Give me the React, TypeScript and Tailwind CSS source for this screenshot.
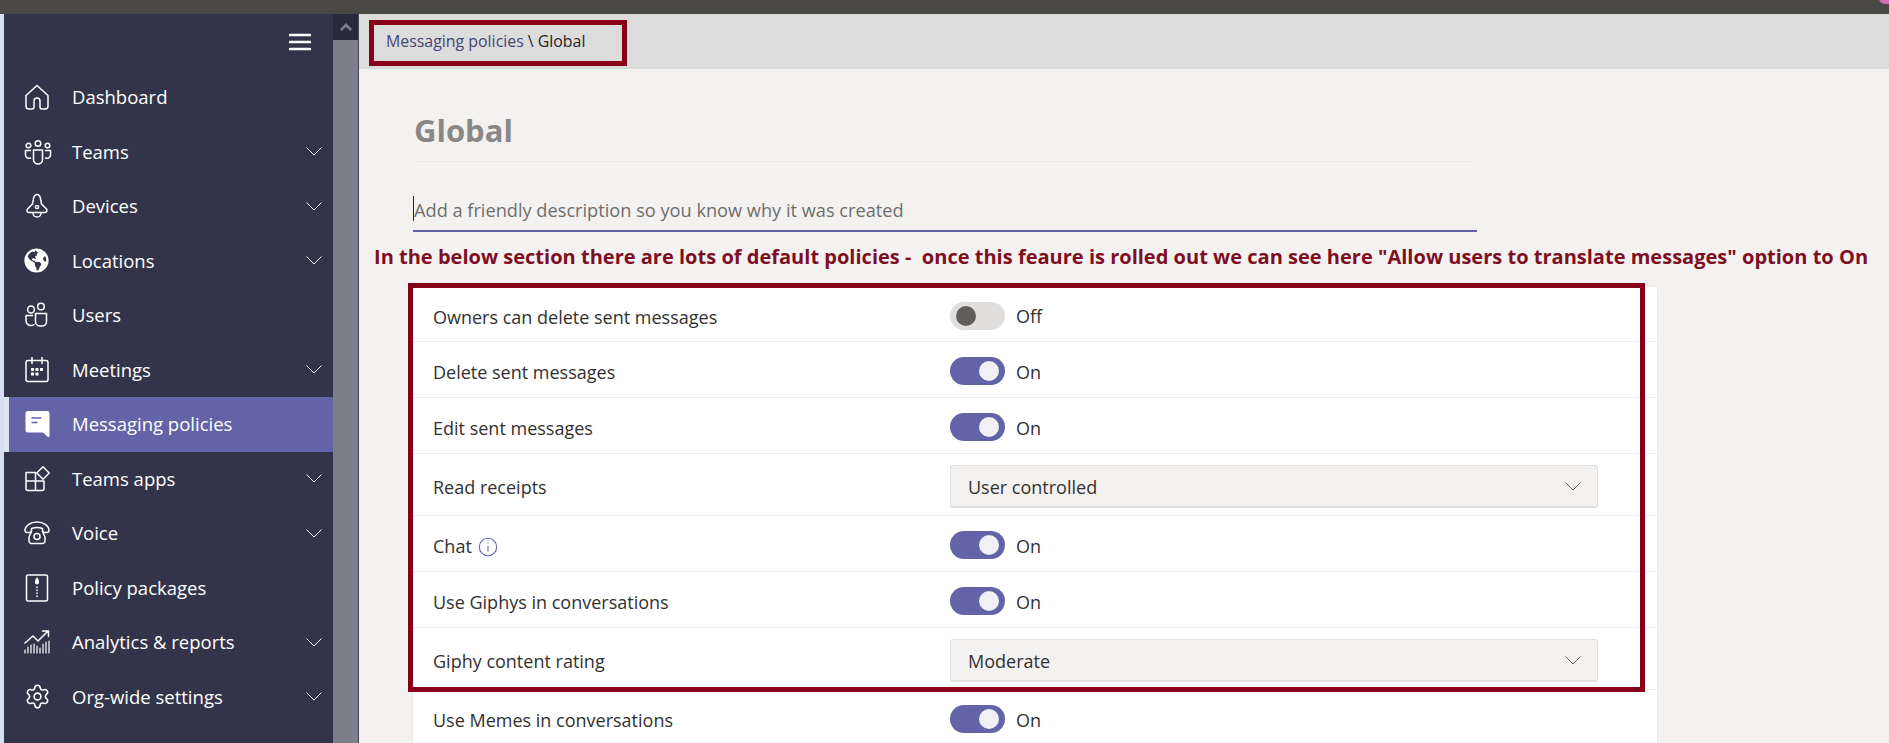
import React from "react";
import { FaGlobeAmericas } from "react-icons/fa";
import { Settings } from "lucide-react";

const s = { fill: "none", stroke: "currentColor", strokeWidth: 1.5, strokeLinecap: "round" as const, strokeLinejoin: "round" as const };

const Home = () => (
  <svg width="26" height="26" viewBox="0 0 26 26" {...s}>
    <path d="M2 11.500 13 1.500l11 10v10.500a3 3 0 0 1-3 3h-3a2 2 0 0 1-2-2v-6a3 3 0 0 0-6 0v6a2 2 0 0 1-2 2H5a3 3 0 0 1-3-3z" />
  </svg>
);
const Teams = () => (
  <svg width="28" height="26" viewBox="0 0 28 26" {...s}>
    <circle cx="14" cy="4.500" r="2.800" />
    <circle cx="4.500" cy="6.500" r="2.300" />
    <circle cx="23.500" cy="6.500" r="2.300" />
    <path d="M9.500 11h9v9.500a4.500 4.500 0 0 1-9 0z" />
    <path d="M6.500 11.500H1.500v4.500a3.500 3.500 0 0 0 5 3M21.500 11.500h5v4.500a3.500 3.500 0 0 1-5 3" />
  </svg>
);
const Devices = () => (
  <svg width="26" height="26" viewBox="0 0 26 26" {...s}>
    <path d="M13 1.500c2 0 3 1.500 3.500 4l1 5.500 5 5c1 1.500.5 3-1.500 3.500H5C3 19.500 2.500 18 3.500 16l5-5 1-5.500C10 3 11 1.500 13 1.500z" />
    <circle cx="13" cy="14" r="1.600" />
    <path d="M9 20.500c.5 3 2.500 3.500 4 3.500s3.500-.5 4-3.500" />
  </svg>
);
const Users = () => (
  <svg width="26" height="26" viewBox="0 0 26 26" {...s}>
    <circle cx="7" cy="7.500" r="3.400" />
    <circle cx="17" cy="4.500" r="3.300" />
    <path d="M11.500 11.500h11v8a4.500 4.500 0 0 1-4.500 4.500h-2a4.500 4.500 0 0 1-4.500-4.500z" />
    <path d="M8.500 13.500H2v5a5 5 0 0 0 8 4" />
  </svg>
);
const Meetings = () => (
  <svg width="26" height="26" viewBox="0 0 26 26" {...s}>
    <path d="M4 3.500h18a2 2 0 0 1 2 2v17a2 2 0 0 1-2 2H4a2 2 0 0 1-2-2v-17a2 2 0 0 1 2-2zM8 .5v6M18 .5v6" />
    <g fill="currentColor" stroke="none">
      <rect x="7" y="11" width="3" height="3" />
      <rect x="11.500" y="11" width="3" height="3" />
      <rect x="16" y="11" width="3" height="3" />
      <rect x="7" y="15.500" width="3" height="3" />
      <rect x="11.500" y="15.500" width="3" height="3" />
    </g>
  </svg>
);
const Message = () => (
  <svg width="26" height="26" viewBox="0 0 26 26">
    <path d="M4 0h19a2.500 2.500 0 0 1 2.500 2.500V25c0 1-1 1.500-1.800.8L19 21.500H4A2.500 2.500 0 0 1 1.500 19V2.500A2.500 2.500 0 0 1 4 0z" fill="#fff" />
    <path d="M7.500 7h10M7.500 11.500h6" stroke="#6264a7" strokeWidth="1.600" fill="none" />
  </svg>
);
const Apps = () => (
  <svg width="26" height="26" viewBox="0 0 26 26" {...s}>
    <path d="M2 6.500h9.500V15H2zM2 15h9.500v9.500H4a2 2 0 0 1-2-2zM11.500 15H20v7.500a2 2 0 0 1-2 2h-6.500z" />
    <path d="M19 .8l6.200 6.200-6.200 6.200L12.800 7z" />
  </svg>
);
const Voice = () => (
  <svg width="26" height="26" viewBox="0 0 26 26" {...s}>
    <path d="M1 10.500C1 6 6 2 13 2s12 4 12 8.500c0 1.500-1 2-2.500 2h-2c-1.500 0-2-1-2-2.500V8.500c-3-1-8-1-11 0V10c0 1.500-.5 2.500-2 2.500h-2C2 12.500 1 12 1 10.500z" />
    <path d="M7.500 11.500 5 17v4a2.500 2.500 0 0 0 2.500 2.500h11A2.500 2.500 0 0 0 21 21v-4l-2.500-5.500" />
    <circle cx="13" cy="16.500" r="3" />
  </svg>
);
const Policy = () => (
  <svg width="26" height="28" viewBox="0 0 26 28" {...s}>
    <rect x="2.500" y="1" width="21" height="26" rx="1.500" />
    <path d="M13 3c1.500 2 2 3.500 2 5.500a2 2 0 0 1-4 0C11 6.500 11.500 5 13 3z" fill="currentColor" stroke="none" />
    <path d="M13 13v.5M13 16v.5M13 19v.5M13 22v.5" />
  </svg>
);
const Analytics = () => (
  <svg width="26" height="24" viewBox="0 0 26 24" fill="none" stroke="currentColor" strokeWidth="1.200" strokeLinecap="round">
    <path d="M1 23v-3M4 23v-6M7 23v-8M10 23v-9M13 23v-7M16 23v-5M19 23v-9M22 23v-11M25 23V11" />
    <path d="M1 13 9 6l5 5L24 1M18.500 1H24.500V6.500" strokeWidth="1.500" />
  </svg>
);
const Hamburger = () => (
  <svg width="22" height="18" viewBox="0 0 22 18" fill="none" stroke="#fff" strokeWidth="2.600" strokeLinecap="round">
    <path d="M1 2h20M1 9h20M1 16h20" />
  </svg>
);
const Chevron = ({ color = "#fff" }: { color?: string }) => (
  <svg width="16" height="9" viewBox="0 0 16 9" fill="none" stroke={color} strokeWidth="1">
    <path d="M.5.500 8 8l7.500-7.500" />
  </svg>
);
const Checklist = () => (
  <svg width="28" height="10" viewBox="0 0 28 10" fill="none" stroke="currentColor" strokeWidth="1.500">
    <path d="M1 2l2.500 2.500L7 1M2 1l3 3M11 2h17" />
  </svg>
);

const nav: { label: string; icon: React.ReactNode; chev?: boolean; active?: boolean }[] = [
  { label: "Dashboard", icon: <Home /> },
  { label: "Teams", icon: <Teams />, chev: true },
  { label: "Devices", icon: <Devices />, chev: true },
  { label: "Locations", icon: <FaGlobeAmericas size={25} />, chev: true },
  { label: "Users", icon: <Users /> },
  { label: "Meetings", icon: <Meetings />, chev: true },
  { label: "Messaging policies", icon: <Message />, active: true },
  { label: "Teams apps", icon: <Apps />, chev: true },
  { label: "Voice", icon: <Voice />, chev: true },
  { label: "Policy packages", icon: <Policy /> },
  { label: "Analytics & reports", icon: <Analytics />, chev: true },
  { label: "Org-wide settings", icon: <Settings size={27} strokeWidth={1.4} />, chev: true },
  { label: "", icon: <Checklist /> },
];

const Toggle = ({ on }: { on: boolean }) => (
  <div className="flex items-center">
    <div className={`flex h-[28px] w-[55px] items-center rounded-full px-[6px] ${on ? "justify-end bg-[#6264a7]" : "justify-start bg-[#e1dfdd]"}`}>
      <div className={`h-[20px] w-[20px] rounded-full ${on ? "bg-[#f0f0f5]" : "bg-[#605e5c]"}`} />
    </div>
    <span className="ml-[11px] pt-[2px] text-[#323130]">{on ? "On" : "Off"}</span>
  </div>
);

const Dropdown = ({ value }: { value: string }) => (
  <div className="flex h-[43px] w-[648px] items-center justify-between rounded-[3px] border border-b-2 border-[#e1dfdd] bg-[#f3f2f1] pl-[17px] pr-[16px] text-[#323130]">
    <span className="pt-[2px]">{value}</span>
    <Chevron color="#605e5c" />
  </div>
);

const rows: { label: string; h: string; toggle?: boolean; select?: string; info?: boolean }[] = [
  { label: "Owners can delete sent messages", h: "h-[55px] pt-[3px]", toggle: false },
  { label: "Delete sent messages", h: "h-[56px] pt-[3px]", toggle: true },
  { label: "Edit sent messages", h: "h-[56px] pt-[3px]", toggle: true },
  { label: "Read receipts", h: "h-[62px] pt-[4px]", select: "User controlled" },
  { label: "Chat", h: "h-[56px] pt-[3px]", toggle: true, info: true },
  { label: "Use Giphys in conversations", h: "h-[56px] pt-[3px]", toggle: true },
  { label: "Giphy content rating", h: "h-[62px] pt-[4px]", select: "Moderate" },
  { label: "Use Memes in conversations", h: "h-[56px] pt-[3px]", toggle: true },
];

export default function App() {
  return (
    <div className="relative flex h-[743px] w-[1889px] flex-col overflow-hidden bg-[#f3f2f1] font-['Open_Sans',sans-serif] text-[18px]">
      <div className="relative h-[14px] shrink-0 bg-[#4a4844]">
        <div className="absolute right-[-6px] top-[-8px] h-[12px] w-[16px] rounded-full bg-[#d86ab8]" />
      </div>
      <div className="flex min-h-0 flex-1">
        <div className="w-[4px] shrink-0 bg-[#d6dfef]" />
        <aside className="w-[329px] shrink-0 overflow-hidden bg-[#33344a] text-[18.500px] text-white">
          <div className="flex h-[56px] items-center justify-end pb-[1px] pr-[22px]"><Hamburger /></div>
          <nav>
            {nav.map((n, i) => (
              <div key={i} className={`flex h-[54.500px] items-center ${n.active ? "border-l-[5px] border-[#dfe4f4] bg-[#6264a7] pl-[15px]" : "pl-[20px]"} pr-[11px]`}>
                <span className="flex w-[32px] shrink-0 items-center justify-start">{n.icon}</span>
                <span className="ml-[16px] flex-1 whitespace-nowrap">{n.label}</span>
                {n.chev && <Chevron />}
              </div>
            ))}
          </nav>
        </aside>
        <div className="flex w-[25px] shrink-0 flex-col bg-[#7e7e8a]">
          <div className="flex h-[26px] items-center justify-center bg-[#292a3b]">
            <svg width="12" height="8" viewBox="0 0 12 8"><path d="M6 0l6 6-1.500 2L6 4 1.500 8 0 6z" fill="#7e7e8a" /></svg>
          </div>
        </div>
        <div className="w-[1px] shrink-0 bg-[#444552]" />
        <main className="min-w-0 flex-1">
          <div className="relative flex h-[55px] items-center border-b-[2px] border-[#d8d7d7] bg-[#dddcdd] pl-[27px] pt-[3px] text-[15.900px]">
            <span className="text-[#464775]">Messaging policies</span>
            <span className="ml-[4px] text-[#252423]">\ Global</span>
            <div className="absolute left-[10px] top-[6px] h-[46px] w-[258px] border-[5px] border-[#850018]" />
          </div>
          <div className="pl-[54px]">
            <h1 className="mt-[36px] flex h-[57px] w-[1062px] items-center border-b border-[#eaeaea] pb-[6px] pl-[1px] text-[31px] font-bold leading-none text-[#8a8886]">Global</h1>
            <div className="mt-[27px] flex h-[43px] w-[1064px] items-center border-b-2 border-[#6264a7] pt-[2px] text-[18.200px] text-[#6f6d6b]">
              <div className="mb-[4px] h-[25px] w-[1px] bg-[#252423]" />
              <span>Add a friendly description so you know why it was created</span>
            </div>
          </div>
          <p className="ml-[15px] mt-[11px] whitespace-nowrap text-[20.050px] font-bold leading-[27px] text-[#7e0f22]">In the below section there are lots of default policies -&nbsp; once this feaure is rolled out we can see here "Allow users to translate messages" option to On</p>
          <div className="relative ml-[54px] mt-[17px] w-[1244px] rounded-[3px] bg-white shadow-[0_0_3px_rgba(0,0,0,0.08)]">
            {rows.map((r, i) => (
              <div key={i} className={`flex items-center border-b border-[#edebe9] pl-[20px] text-[#323130] ${r.h}`}>
                <div className={`flex w-[517px] shrink-0 items-center ${r.select ? "pt-[2px]" : "pt-[3px]"}`}>
                  <span>{r.label}</span>
                  {r.info && (
                    <svg className="ml-[6px]" width="20" height="20" viewBox="0 0 20 20" fill="none" stroke="#6264a7" strokeWidth="1.100">
                      <circle cx="10" cy="10" r="8.700" />
                      <path d="M10 9v5.500M10 5.700v1" />
                    </svg>
                  )}
                </div>
                {r.select ? <Dropdown value={r.select} /> : <Toggle on={!!r.toggle} />}
              </div>
            ))}
            <div className="absolute left-[-5px] top-[-4px] h-[409px] w-[1237px] border-[5px] border-[#850018]" />
          </div>
        </main>
      </div>
    </div>
  );
}
